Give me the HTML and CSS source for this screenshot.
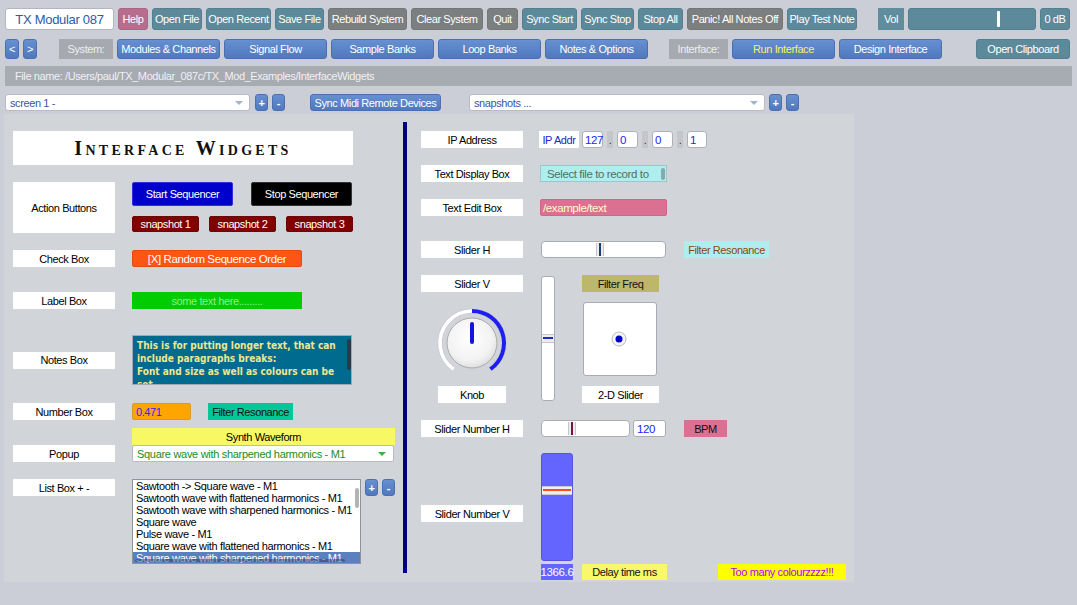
FILE: index.html
```html
<!DOCTYPE html>
<html lang="en">
<head>
<meta charset="utf-8">
<title>TX Modular 087</title>
<link rel="stylesheet" href="styles.css">
</head>
<body>
<div class="bar bar1">
  <div class="brand">TX Modular 087</div>
  <div class="btn pink w-help">Help</div>
  <div class="btn teal w-open">Open File</div>
  <div class="btn teal w-recent">Open Recent</div>
  <div class="btn teal w-save">Save File</div>
  <div class="btn gray w-rebuild">Rebuild System</div>
  <div class="btn gray w-clear">Clear System</div>
  <div class="btn gray w-quit">Quit</div>
  <div class="btn teal w-syncstart">Sync Start</div>
  <div class="btn teal w-syncstop">Sync Stop</div>
  <div class="btn teal w-stopall">Stop All</div>
  <div class="btn gray w-panic">Panic! All Notes Off</div>
  <div class="btn teal w-play">Play Test Note</div>
  <div class="vol-label">Vol</div>
  <div class="vol-slider"><div class="vol-thumb"></div></div>
  <div class="btn teal w-db">0 dB</div>
</div>

<div class="bar bar2">
  <div class="btn blue w-arrow">&lt;</div>
  <div class="btn blue w-arrow">&gt;</div>
  <div class="tag w-system">System:</div>
  <div class="btn blue w-nav">Modules &amp; Channels</div>
  <div class="btn blue w-nav">Signal Flow</div>
  <div class="btn blue w-nav">Sample Banks</div>
  <div class="btn blue w-nav">Loop Banks</div>
  <div class="btn blue w-nav">Notes &amp; Options</div>
  <div class="tag w-interface">Interface:</div>
  <div class="btn blue w-nav run">Run Interface</div>
  <div class="btn blue w-nav">Design Interface</div>
  <div class="btn teal w-clip">Open Clipboard</div>
</div>

<div class="filebar">File name: /Users/paul/TX_Modular_087c/TX_Mod_Examples/InterfaceWidgets</div>

<div class="bar bar3">
  <div class="dropdown w-screen"><span>screen 1 -</span><span class="arrow"></span></div>
  <div class="btn blue pm first-pm">+</div>
  <div class="btn blue pm">-</div>
  <div class="btn blue w-sync">Sync Midi Remote Devices</div>
  <div class="dropdown w-snaps"><span>snapshots ...</span><span class="arrow"></span></div>
  <div class="btn blue pm">+</div>
  <div class="btn blue pm">-</div>
</div>

<div class="panel">
  <div class="col-left">
    <div class="title">Interface Widgets</div>

    <div class="row r-action">
      <div class="lbl lbl-tall">Action Buttons</div>
      <div class="actions">
        <div class="act-top">
          <div class="wb start">Start Sequencer</div>
          <div class="wb stop">Stop Sequencer</div>
        </div>
        <div class="act-bottom">
          <div class="wb snap">snapshot 1</div>
          <div class="wb snap">snapshot 2</div>
          <div class="wb snap">snapshot 3</div>
        </div>
      </div>
    </div>

    <div class="row r-check">
      <div class="lbl">Check Box</div>
      <div class="wb check">[X] Random Sequence Order</div>
    </div>

    <div class="row r-label">
      <div class="lbl">Label Box</div>
      <div class="wb green">some text here.........</div>
    </div>

    <div class="row r-notes">
      <div class="lbl">Notes Box</div>
      <div class="notes">
        <div class="notes-text">This is for putting longer text, that can include paragraphs breaks:<br>Font and size as well as colours can be set</div>
        <div class="notes-scroll"></div>
      </div>
    </div>

    <div class="row r-number">
      <div class="lbl">Number Box</div>
      <div class="numbox">0.471</div>
      <div class="wb res-green">Filter Resonance</div>
    </div>

    <div class="row r-popup">
      <div class="lbl">Popup</div>
      <div class="popup-col">
        <div class="wb waveform">Synth Waveform</div>
        <div class="popup"><span>Square wave with sharpened harmonics - M1</span><span class="arrow green-arrow"></span></div>
      </div>
    </div>

    <div class="row r-list">
      <div class="lbl">List Box + -</div>
      <div class="listbox">
        <div class="li">Sawtooth -&gt; Square wave - M1</div>
        <div class="li">Sawtooth wave with flattened harmonics - M1</div>
        <div class="li">Sawtooth wave with sharpened harmonics - M1</div>
        <div class="li">Square wave</div>
        <div class="li">Pulse wave - M1</div>
        <div class="li">Square wave with flattened harmonics - M1</div>
        <div class="li sel">Square wave with sharpened harmonics - M1</div>
        <div class="list-vscroll"></div>
        <div class="list-hscroll"></div>
      </div>
      <div class="btn blue pm list-plus">+</div>
      <div class="btn blue pm list-minus">-</div>
    </div>
  </div>

  <div class="divider"></div>

  <div class="col-right">
    <div class="row r-ip">
      <div class="lbl">IP Address</div>
      <div class="ip">
        <div class="ip-label">IP Addr</div>
        <div class="ip-box">127</div>
        <div class="ip-dot">.</div>
        <div class="ip-box">0</div>
        <div class="ip-dot">.</div>
        <div class="ip-box">0</div>
        <div class="ip-dot">.</div>
        <div class="ip-box ip-last">1</div>
      </div>
    </div>

    <div class="row r-gap17">
      <div class="lbl">Text Display Box</div>
      <div class="textdisp"><span>Select file to record to</span><span class="td-scroll"></span></div>
    </div>

    <div class="row r-gap17">
      <div class="lbl">Text Edit Box</div>
      <div class="textedit">/example/text</div>
    </div>

    <div class="row r-sliderh">
      <div class="lbl">Slider H</div>
      <div class="hslider hs-main"><div class="hthumb hthumb-a"></div></div>
      <div class="wb res-cyan">Filter Resonance</div>
    </div>

    <div class="row r-sliderv">
      <div class="colA">
        <div class="lbl">Slider V</div>
        <svg class="knob" width="72" height="72" viewBox="0 0 72 72">
          <defs>
            <radialGradient id="kg" cx="0.45" cy="0.4" r="0.65">
              <stop offset="0" stop-color="#ffffff"/>
              <stop offset="0.7" stop-color="#f2f2f2"/>
              <stop offset="1" stop-color="#d8d8d8"/>
            </radialGradient>
          </defs>
          <path d="M17.65 62.21 A32 32 0 1 1 54.35 62.21" fill="none" stroke="#c6c8cc" stroke-width="5"/>
          <path d="M17.65 62.21 A32 32 0 1 1 54.35 62.21" fill="none" stroke="#ffffff" stroke-width="3.6"/>
          <path d="M36 4 A32 32 0 0 1 54.35 62.21" fill="none" stroke="#1e1ef0" stroke-width="4"/>
          <circle cx="36" cy="36" r="25" fill="url(#kg)" stroke="#a9abb0" stroke-width="1"/>
          <line x1="36" y1="17" x2="36" y2="35" stroke="#1414e0" stroke-width="4" stroke-linecap="round"/>
        </svg>
        <div class="lbl knob-lbl">Knob</div>
      </div>
      <div class="vslider"><div class="vthumb"></div></div>
      <div class="colC">
        <div class="wb freq">Filter Freq</div>
        <div class="xy">
          <svg width="74" height="74" viewBox="0 0 74 74">
            <circle cx="36" cy="37" r="7" fill="#f4f4f4" stroke="#b8bbc0" stroke-width="1"/>
            <circle cx="36" cy="37" r="3.5" fill="#0000c8"/>
          </svg>
        </div>
        <div class="lbl xy-lbl">2-D Slider</div>
      </div>
    </div>

    <div class="row r-gap17">
      <div class="lbl">Slider Number H</div>
      <div class="hslider hs-num"><div class="hthumb hthumb-b"></div></div>
      <div class="numh">120</div>
      <div class="wb bpm">BPM</div>
    </div>

    <div class="row r-numv">
      <div class="lbl numv-lbl">Slider Number V</div>
      <div class="colB">
        <div class="vnum-slider"><div class="vnum-thumb"></div></div>
        <div class="vnum-box">1366.6</div>
      </div>
      <div class="wb delay">Delay time ms</div>
      <div class="wb toomany">Too many colourzzzz!!!</div>
    </div>
  </div>
</div>
</body>
</html>
```

FILE: styles.css
```css
* { box-sizing: border-box; margin: 0; padding: 0; }

body {
  background: #cbced6;
  font-family: "Liberation Sans", Arial, sans-serif;
  font-size: 11px;
  letter-spacing: -0.4px;
  color: #000;
  width: 1077px;
  height: 605px;
  overflow: hidden;
}

/* ---------- toolbars ---------- */
.bar { display: flex; align-items: center; padding-left: 5px; gap: 4px; }
.bar1 { margin-top: 8px; height: 22px; }
.bar2 { margin-top: 9px; height: 20px; }
.bar3 { margin-top: 8px; height: 17px; }

.btn {
  height: 100%;
  display: flex;
  align-items: center;
  justify-content: center;
  color: #fff;
  border-radius: 3px;
  white-space: nowrap;
  flex: none;
}
.teal { background: #5d8a9a; border: 1px solid #557f8e; }
.gray { background: #7b7f80; border: 1px solid #737778; }
.pink { background: #b76e8e; border: 1px solid #ad6586; }
.blue {
  background: linear-gradient(#6690d2, #5178bd);
  border: 1px solid #4a70b2;
}

.brand {
  width: 109px;
  height: 22px;
  background: #fff;
  border: 1px solid #b3b6bd;
  border-radius: 3px;
  color: #2c5ba8;
  font-size: 13px;
  letter-spacing: -0.3px;
  display: flex;
  align-items: center;
  justify-content: center;
  flex: none;
}

.w-help { width: 30px; }
.w-open { width: 50px; }
.w-recent { width: 65px; }
.w-save { width: 49px; }
.w-rebuild { width: 79px; }
.w-clear { width: 72px; }
.w-quit { width: 31px; }
.w-syncstart { width: 55px; }
.w-syncstop { width: 53px; }
.w-stopall { width: 45px; }
.w-panic { width: 96px; }
.w-play { width: 70px; }
.w-db { width: 30px; }

.vol-label {
  margin-left: 17px;
  width: 26px;
  height: 100%;
  background: #5f8d9d;
  color: #fff;
  display: flex;
  align-items: center;
  justify-content: center;
}
.vol-slider {
  position: relative;
  width: 128px;
  height: 100%;
  background: #5d8a9a;
  border: 1px solid #557f8e;
  border-radius: 3px;
}
.vol-thumb {
  position: absolute;
  left: 88px;
  top: 2px;
  width: 3px;
  height: 16px;
  background: #fff;
  border-radius: 1px;
}

.w-arrow { width: 14px; }
.tag {
  height: 100%;
  background: #a6aab0;
  color: #eceef0;
  display: flex;
  align-items: center;
  justify-content: center;
  flex: none;
}
.w-system { width: 54px; margin-left: 18px; }
.w-interface { width: 59px; margin-left: 17px; }
.w-nav { width: 103px; }
.run { color: #f4f45a; }
.w-clip { width: 94px; margin-left: 30px; }

.filebar {
  margin: 7px 0 0 5px;
  width: 1067px;
  height: 20px;
  line-height: 20px;
  background: #a7abb2;
  color: #f0f0f2;
  padding-left: 10px;
}

.dropdown {
  height: 100%;
  background: #fff;
  border: 1px solid #b8bbc2;
  border-radius: 3px;
  color: #3a55a8;
  display: flex;
  align-items: center;
  justify-content: space-between;
  padding: 0 6px 0 4px;
  flex: none;
}
.arrow {
  width: 0;
  height: 0;
  border-left: 4px solid transparent;
  border-right: 4px solid transparent;
  border-top: 4px solid #9fb3d3;
}
.w-screen { width: 245px; }
.w-snaps { width: 296px; margin-left: 24px; }
.pm { width: 13px; font-weight: bold; font-size: 11px; }
.first-pm { margin-left: 1px; }
.w-sync { width: 131px; margin-left: 21px; }

/* ---------- panel ---------- */
.panel {
  margin: 3px 0 0 4px;
  width: 850px;
  height: 468px;
  background: #d1d4d9;
  display: flex;
  align-items: flex-start;
  padding: 8px 0 0 9px;
}
.col-left { width: 382px; margin-top: 9px; display: flex; flex-direction: column; }
.divider { width: 4px; height: 451px; background: #000080; margin-left: 8px; flex: none; }
.col-right { margin-left: 14px; margin-top: 9px; display: flex; flex-direction: column; }

.row { display: flex; align-items: flex-start; }

.lbl {
  width: 102px;
  height: 17px;
  background: #fff;
  display: flex;
  align-items: center;
  justify-content: center;
  flex: none;
  white-space: nowrap;
}
.lbl-tall { height: 51px; }

.wb {
  display: flex;
  align-items: center;
  justify-content: center;
  height: 17px;
  white-space: nowrap;
  flex: none;
}

.title {
  width: 340px;
  height: 34px;
  background: #fff;
  display: flex;
  align-items: center;
  justify-content: center;
  font-family: "Liberation Serif", "Times New Roman", serif;
  font-weight: bold;
  font-variant: small-caps;
  font-size: 20px;
  letter-spacing: 3.3px;
  color: #111;
}

.r-action { margin-top: 17px; }
.actions { margin-left: 17px; display: flex; flex-direction: column; }
.act-top { display: flex; gap: 18px; }
.start, .stop { width: 101px; height: 24px; color: #fff; border-radius: 2px; }
.start { background: #0000cc; border: 1px solid #3030d8; }
.stop { background: #000; border: 1px solid #333; }
.act-bottom { display: flex; gap: 10px; margin-top: 10px; }
.snap { width: 67px; height: 16px; background: #800000; border: 1px solid #6a0808; color: #fff; border-radius: 2px; }

.r-check { margin-top: 17px; }
.check { margin-left: 17px; width: 170px; background: #ff5514; color: #fff; border: 1px solid #e64a10; border-radius: 2px; font-size: 11.5px; }

.r-label { margin-top: 25px; }
.green { margin-left: 17px; width: 170px; background: #00cc00; color: #90ee90; }

.r-notes { margin-top: 26px; align-items: center; }
.notes {
  margin-left: 17px;
  width: 220px;
  height: 50px;
  background: #006b8f;
  border: 1px solid #a0a8b0;
  display: flex;
  overflow: hidden;
  padding: 3px 3px 0 4px;
}
.notes-text {
  width: 206px;
  flex: none;
  color: #f0e68c;
  font-family: "DejaVu Sans Condensed", "DejaVu Sans", sans-serif;
  font-weight: bold;
  font-size: 10px;
  letter-spacing: 0;
  line-height: 13px;
}
.notes-scroll {
  margin-left: 4px;
  margin-top: 0;
  width: 4px;
  height: 31px;
  background: #2a3a4a;
  border-radius: 2px;
  flex: none;
}

.r-number { margin-top: 18px; }
.numbox {
  margin-left: 17px;
  width: 59px;
  height: 17px;
  background: #ffa500;
  border: 1px solid #d89a30;
  border-radius: 2px;
  color: #2828ff;
  padding-left: 3px;
  display: flex;
  align-items: center;
}
.res-green { margin-left: 17px; width: 85px; background: #00c896; color: #111; }

.r-popup { margin-top: 8px; align-items: flex-end; }
.popup-col { margin-left: 17px; display: flex; flex-direction: column; }
.waveform { width: 263px; background: #f8f864; }
.popup {
  width: 262px;
  height: 17px;
  background: #fff;
  border: 1px solid #b8bbc2;
  border-radius: 2px;
  color: #228b22;
  display: flex;
  align-items: center;
  justify-content: space-between;
  padding: 0 7px 0 4px;
  font-size: 11px;
  letter-spacing: -0.3px;
}
.green-arrow { border-top-color: #3cb043; }

.r-list { margin-top: 17px; }
.listbox {
  position: relative;
  margin-left: 17px;
  width: 229px;
  height: 85px;
  background: #fff;
  border: 1px solid #8f949c;
  overflow: hidden;
  font-size: 11px;
  letter-spacing: -0.35px;
  line-height: 12px;
}
.li { padding-left: 3px; white-space: nowrap; height: 12px; }
.sel { background: #5a80c0; color: #fff; }
.list-vscroll {
  position: absolute;
  left: 222px;
  top: 8px;
  width: 4px;
  height: 20px;
  background: #b4b4b4;
  border-radius: 2px;
}
.list-hscroll {
  position: absolute;
  left: 2px;
  bottom: 1px;
  width: 210px;
  height: 3px;
  background: rgba(40, 50, 80, 0.45);
  border-radius: 2px;
}
.list-plus { margin-left: 4px; height: 17px; }
.list-minus { margin-left: 4px; height: 17px; }

/* right column */
.ip { display: flex; margin-left: 16px; height: 17px; gap: 4px; }
.ip-label {
  width: 40px;
  height: 17px;
  background: #fff;
  color: #2424c8;
  display: flex;
  align-items: center;
  justify-content: center;
  margin-right: -1px;
}
.ip-box {
  width: 21px;
  height: 17px;
  background: #fff;
  border: 1px solid #aeb1b7;
  border-radius: 3px;
  color: #2424ff;
  display: flex;
  align-items: center;
  padding-left: 2px;
  font-size: 11.5px;
}
.ip-last { width: 20px; }
.ip-dot {
  width: 6px;
  height: 17px;
  background: #c4c6cb;
  color: #333;
  display: flex;
  align-items: center;
  justify-content: center;
}

.r-gap17 { margin-top: 17px; }
.textdisp {
  margin-left: 17px;
  width: 127px;
  height: 17px;
  background: #afeeee;
  border: 1px solid #98c8c8;
  color: #53705f;
  display: flex;
  align-items: center;
  justify-content: space-between;
  padding: 0 1px 0 6px;
  font-size: 11.5px;
}
.td-scroll { width: 4px; height: 12px; background: #86a9a9; border-radius: 2px; }
.textedit {
  margin-left: 17px;
  width: 127px;
  height: 17px;
  background: #db7093;
  border: 1px solid #c9698a;
  border-radius: 2px;
  color: #ffffcc;
  display: flex;
  align-items: center;
  padding-left: 2px;
  font-size: 11.5px;
}

.r-sliderh { margin-top: 25px; }
.hslider {
  position: relative;
  height: 17px;
  background: #fff;
  border: 1px solid #a9acb2;
  border-radius: 4px;
  margin-left: 18px;
  flex: none;
}
.hs-main { width: 125px; }
.hs-num { width: 89px; }
.hthumb {
  position: absolute;
  top: 1px;
  width: 8px;
  height: 13px;
  background: #ececec;
  border-left: 1px solid #c4c6ca;
  border-right: 1px solid #c4c6ca;
}
.hthumb::after {
  content: "";
  position: absolute;
  left: 2px;
  top: 0;
  width: 2px;
  height: 13px;
  background: #1b3e70;
}
.hthumb-a { left: 54px; }
.hthumb-b { left: 26px; }
.hthumb-b::after { background: #7a1048; }
.res-cyan { margin-left: 18px; width: 85px; background: #afeeee; color: #8b4513; }

.r-sliderv { margin-top: 17px; }
.colA { width: 102px; display: flex; flex-direction: column; flex: none; }
.knob { margin: 15px 0 0 15px; display: block; }
.knob-lbl { margin: 7px 0 0 17px; width: 68px; }
.vslider {
  position: relative;
  margin: 1px 0 0 18px;
  width: 14px;
  height: 125px;
  background: #fff;
  border: 1px solid #a9acb2;
  border-radius: 3px;
  flex: none;
}
.vthumb {
  position: absolute;
  left: 0;
  top: 57px;
  width: 12px;
  height: 9px;
  background: #ececec;
  border-top: 1px solid #c4c6ca;
  border-bottom: 1px solid #c4c6ca;
}
.vthumb::after {
  content: "";
  position: absolute;
  left: 1px;
  top: 2px;
  width: 10px;
  height: 2px;
  background: #1a2fc0;
}
.colC { margin-left: 27px; width: 77px; display: flex; flex-direction: column; flex: none; }
.freq { width: 77px; background: #bdb76b; color: #111; }
.xy {
  margin: 10px 0 0 1px;
  width: 74px;
  height: 74px;
  background: #fff;
  border: 1px solid #a9acb2;
  border-radius: 3px;
  overflow: hidden;
}
.xy svg { display: block; margin: -1px 0 0 -1px; }
.xy-lbl { margin-top: 10px; width: 77px; }

.numh {
  margin-left: 3px;
  width: 33px;
  height: 17px;
  background: #fff;
  border: 1px solid #a9acb2;
  border-radius: 3px;
  color: #2424ff;
  display: flex;
  align-items: center;
  padding-left: 3px;
  font-size: 11.5px;
}
.bpm { margin-left: 18px; width: 43px; background: #db7093; color: #111; }

.r-numv { margin-top: 16px; }
.numv-lbl { margin-top: 52px; }
.colB { margin-left: 18px; display: flex; flex-direction: column; flex: none; }
.vnum-slider {
  position: relative;
  width: 32px;
  height: 108px;
  background: #6464ff;
  border: 1px solid #5656dc;
  border-radius: 3px;
}
.vnum-thumb {
  position: absolute;
  left: 0;
  top: 32px;
  width: 30px;
  height: 9px;
  background: #f0f0f0;
  border-top: 1px solid #c8c8d0;
  border-bottom: 1px solid #c8c8d0;
}
.vnum-thumb::after {
  content: "";
  position: absolute;
  left: 1px;
  top: 2px;
  width: 28px;
  height: 2px;
  background: #ff4a1a;
}
.vnum-box {
  margin-top: 3px;
  width: 32px;
  height: 16px;
  background: #6464ff;
  color: #fff;
  display: flex;
  align-items: center;
  justify-content: center;
  font-size: 11.5px;
}
.delay { align-self: flex-end; margin-left: 9px; width: 85px; height: 16px; background: #f8f86a; color: #111; }
.toomany { align-self: flex-end; margin-left: 51px; width: 128px; height: 16px; background: #ffff00; color: #b400ff; }
```
